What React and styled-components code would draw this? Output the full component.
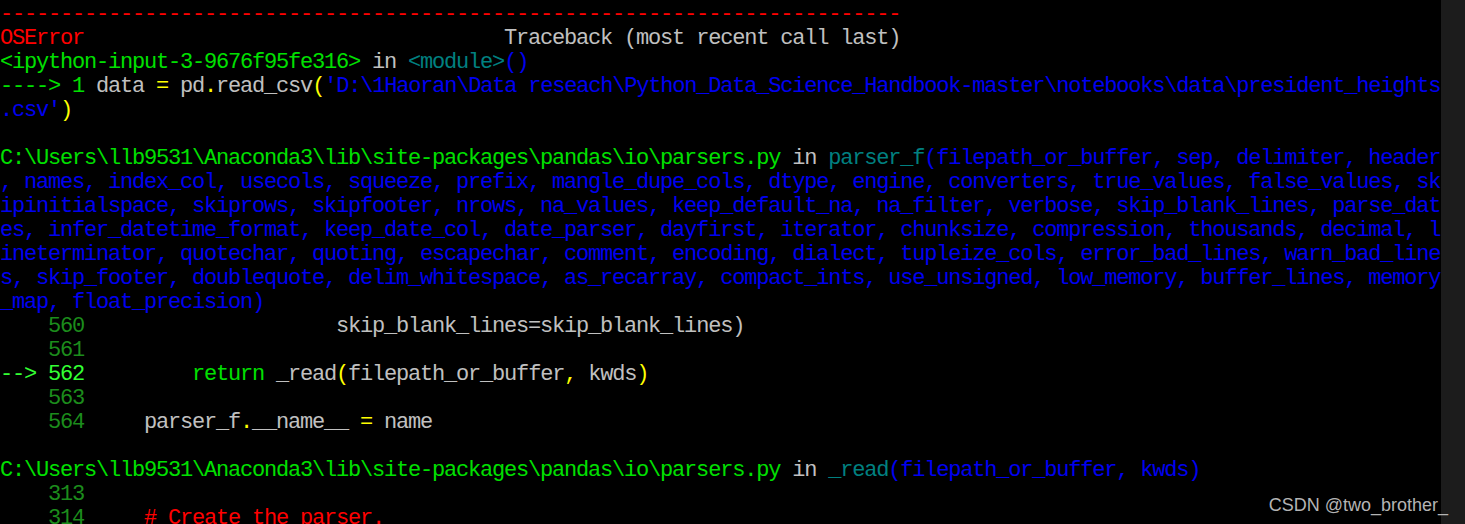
import React from 'react'
import styled, { createGlobalStyle } from 'styled-components'

const GlobalStyle = createGlobalStyle`
    html, body {
        margin: 0;
        padding: 0;
        background: #000;
    }
    #root {
        width: 1465px;
        height: 524px;
        overflow: hidden;
    }
`

const c = {
    red: '#ff0000',
    green: '#00e000',
    bright: '#33ff33',
    num: '#1c8c1c',
    gray: '#c0c0c0',
    yellow: '#ffff00',
    blue: '#0000f0',
    teal: '#008080',
}

const Terminal = styled.div`
    position: relative;
    display: flex;
    width: 1465px;
    height: 524px;
    background: #000;
`

const Output = styled.pre`
    flex: 0 0 1441px;
    margin: 0;
    padding: 3px 0 0 0;
    overflow: hidden;
    font-family: "Liberation Mono", "DejaVu Sans Mono", monospace;
    font-size: 22px;
    letter-spacing: -1.2px;
    line-height: 24px;
    color: ${c.gray};
`

const Line = styled.div`
    height: 24px;
    white-space: pre;
`

const Tok = styled.span`
    color: ${p => p.$c};
`

const Scrollbar = styled.div`
    flex: 1;
    background: #1c1c1c;
`

const Watermark = styled.div`
    position: absolute;
    right: 17px;
    bottom: 8px;
    font-family: "Liberation Sans", Arial, sans-serif;
    font-size: 18px;
    color: #b4b4b4;
    white-space: nowrap;
`

const path = String.raw`C:\Users\llb9531\Anaconda3\lib\site-packages\pandas\io\parsers.py`

const argLines = [
    ', names, index_col, usecols, squeeze, prefix, mangle_dupe_cols, dtype, engine, converters, true_values, false_values, sk',
    'ipinitialspace, skiprows, skipfooter, nrows, na_values, keep_default_na, na_filter, verbose, skip_blank_lines, parse_dat',
    'es, infer_datetime_format, keep_date_col, date_parser, dayfirst, iterator, chunksize, compression, thousands, decimal, l',
    'ineterminator, quotechar, quoting, escapechar, comment, encoding, dialect, tupleize_cols, error_bad_lines, warn_bad_line',
    's, skip_footer, doublequote, delim_whitespace, as_recarray, compact_ints, use_unsigned, low_memory, buffer_lines, memory',
    '_map, float_precision)',
]

function App () {
    return (
        <>
            <GlobalStyle />
            <Terminal>
                <Output>
                    <Line><Tok $c={c.red}>{'-'.repeat(75)}</Tok></Line>
                    <Line>
                        <Tok $c={c.red}>OSError</Tok>
                        {' '.repeat(35)}
                        <Tok $c={c.gray}>Traceback (most recent call last)</Tok>
                    </Line>
                    <Line>
                        <Tok $c={c.green}>{'<ipython-input-3-9676f95fe316>'}</Tok>
                        {' in '}
                        <Tok $c={c.teal}>{'<module>'}</Tok>
                        <Tok $c={c.blue}>()</Tok>
                    </Line>
                    <Line>
                        <Tok $c={c.green}>{'----> 1 '}</Tok>
                        {'data '}
                        <Tok $c={c.yellow}>=</Tok>
                        {' pd'}
                        <Tok $c={c.yellow}>.</Tok>
                        {'read_csv'}
                        <Tok $c={c.yellow}>(</Tok>
                        <Tok $c={c.blue}>{String.raw`'D:\1Haoran\Data reseach\Python_Data_Science_Handbook-master\notebooks\data\president_heights`}</Tok>
                    </Line>
                    <Line>
                        <Tok $c={c.blue}>{".csv'"}</Tok>
                        <Tok $c={c.yellow}>)</Tok>
                    </Line>
                    <Line />
                    <Line>
                        <Tok $c={c.green}>{path}</Tok>
                        {' in '}
                        <Tok $c={c.teal}>parser_f</Tok>
                        <Tok $c={c.blue}>(filepath_or_buffer, sep, delimiter, header</Tok>
                    </Line>
                    {argLines.map(text => (
                        <Line key={text}><Tok $c={c.blue}>{text}</Tok></Line>
                    ))}
                    <Line>
                        <Tok $c={c.num}>{'    560'}</Tok>
                        {' '.repeat(21)}
                        skip_blank_lines=skip_blank_lines)
                    </Line>
                    <Line><Tok $c={c.num}>{'    561'}</Tok></Line>
                    <Line>
                        <Tok $c={c.bright}>{'--> 562'}</Tok>
                        {' '.repeat(9)}
                        <Tok $c={c.green}>return</Tok>
                        {' _read'}
                        <Tok $c={c.yellow}>(</Tok>
                        {'filepath_or_buffer'}
                        <Tok $c={c.yellow}>,</Tok>
                        {' kwds'}
                        <Tok $c={c.yellow}>)</Tok>
                    </Line>
                    <Line><Tok $c={c.num}>{'    563'}</Tok></Line>
                    <Line>
                        <Tok $c={c.num}>{'    564'}</Tok>
                        {'     parser_f'}
                        <Tok $c={c.yellow}>.</Tok>
                        {'__name__ '}
                        <Tok $c={c.yellow}>=</Tok>
                        {' name'}
                    </Line>
                    <Line />
                    <Line>
                        <Tok $c={c.green}>{path}</Tok>
                        {' in '}
                        <Tok $c={c.teal}>_read</Tok>
                        <Tok $c={c.blue}>(filepath_or_buffer, kwds)</Tok>
                    </Line>
                    <Line><Tok $c={c.num}>{'    313'}</Tok></Line>
                    <Line>
                        <Tok $c={c.num}>{'    314'}</Tok>
                        {'     '}
                        <Tok $c={c.red}># Create the parser.</Tok>
                    </Line>
                </Output>
                <Scrollbar />
                <Watermark>CSDN @two_brother_</Watermark>
            </Terminal>
        </>
    )
}

export default App
